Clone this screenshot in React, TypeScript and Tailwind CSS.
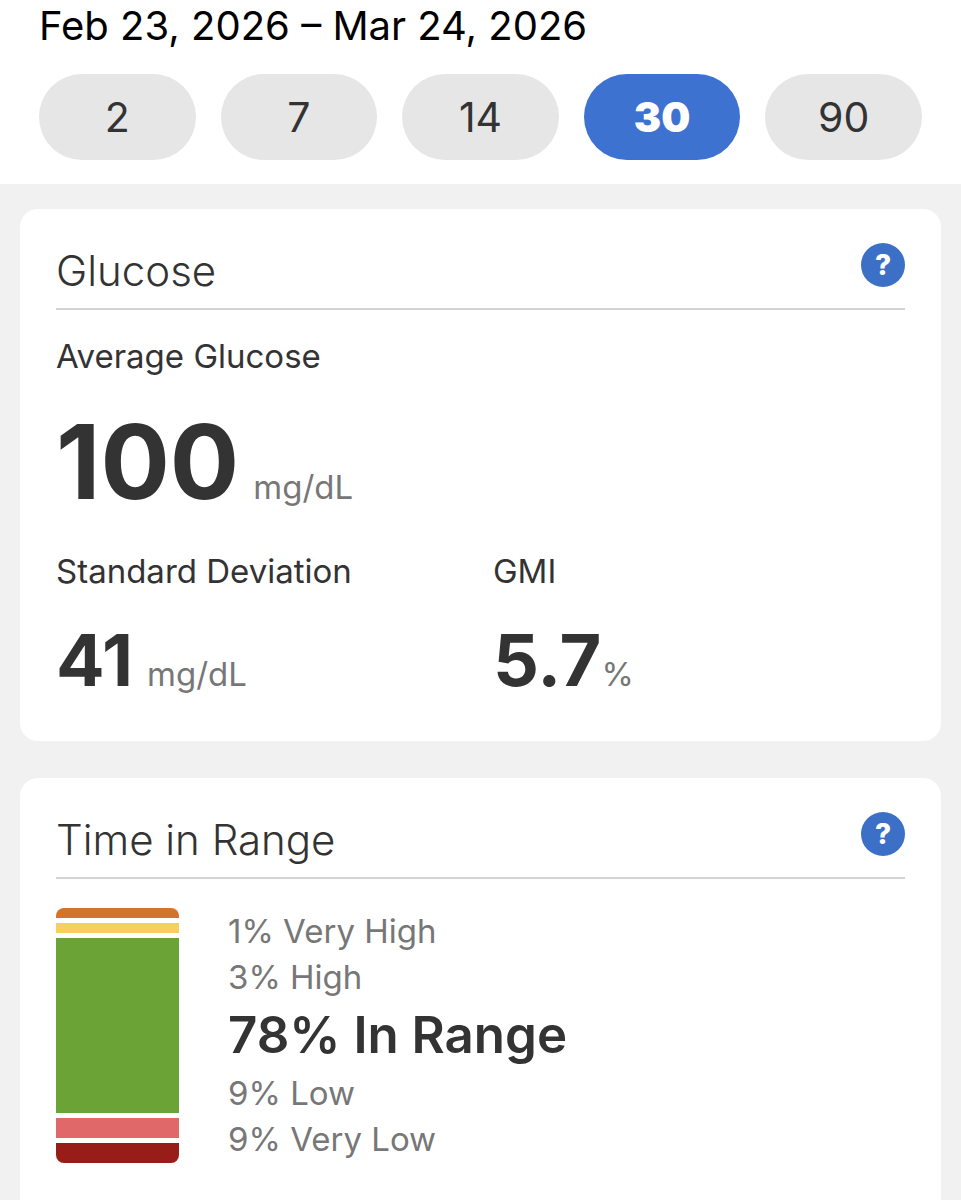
import { useState } from "react";
import type { ReactNode } from "react";
import clsx from "clsx";

const dayRanges = [2, 7, 14, 30, 90];

const rangeBands = [
    { label: "1% Very High", color: "bg-[#d3742d]", height: "h-[10px]" },
    { label: "3% High", color: "bg-[#f6cf5e]", height: "h-[10px]" },
    { label: "78% In Range", color: "bg-[#6ca336]", height: "h-[175px]", main: true },
    { label: "9% Low", color: "bg-[#e06868]", height: "h-[20px]" },
    { label: "9% Very Low", color: "bg-[#981c17]", height: "h-[20px]" },
];

type CardProps = {
    title: string;
    className?: string;
    children: ReactNode;
};

function Card({ title, className, children }: CardProps) {
    return (
        <section className={clsx("bg-white px-9 pt-[34px] pb-[30px]", className)}>
            <div className="flex items-start justify-between h-[67px] border-b-2 border-[#d4d4d4]">
                <h2 className="text-[42px] leading-[56px] font-light">{title}</h2>
                <button
                    type="button"
                    aria-label={`About ${title}`}
                    className="flex items-center justify-center size-11 rounded-full bg-[#3b70c6] text-white text-[28px] leading-none font-extrabold"
                >
                    ?
                </button>
            </div>
            {children}
        </section>
    );
}

type StatProps = {
    label: string;
    value: string;
    unit: string;
    large?: boolean;
    tight?: boolean;
};

function Stat({ label, value, unit, large, tight }: StatProps) {
    return (
        <div>
            <h3 className="text-[33px] leading-[44px]">{label}</h3>
            <p
                className={clsx(
                    "flex items-baseline",
                    tight ? "gap-0" : "gap-[14px]",
                    large ? "mt-6" : "mt-4"
                )}
            >
                <span
                    className={clsx(
                        "font-bold",
                        large ? "text-[103px] leading-[120px]" : "text-[72px] leading-[102px]"
                    )}
                >
                    {value}
                </span>
                <span className="text-[33px] leading-[44px] text-[#777777]">{unit}</span>
            </p>
        </div>
    );
}

export default function App() {
    const [days, setDays] = useState(30);

    return (
        <div className="flex flex-col min-h-screen bg-[#f1f1f1] text-[#333333] font-['Inter',sans-serif]">
            {/* Date range and day picker */}
            <header className="bg-white px-[39px] pb-6">
                <h1 className="text-[40px] leading-[52px] text-black whitespace-nowrap">
                    Feb 23, 2026 – Mar 24, 2026
                </h1>
                <div className="grid grid-cols-5 gap-[25px] mt-[22px]">
                    {dayRanges.map((range) => (
                        <button
                            key={range}
                            type="button"
                            aria-pressed={range === days}
                            onClick={() => setDays(range)}
                            className={clsx(
                                "h-[86px] pt-[2px] rounded-full text-[41px]",
                                range === days
                                    ? "bg-[#3e72d1] text-white font-black"
                                    : "bg-[#e6e6e6]"
                            )}
                        >
                            {range}
                        </button>
                    ))}
                </div>
            </header>

            <main className="grow flex flex-col gap-[37px] px-5 pt-[25px]">
                <Card title="Glucose" className="rounded-[18px]">
                    <div className="pt-6">
                        <Stat label="Average Glucose" value="100" unit="mg/dL" large />
                    </div>
                    <div className="grid grid-cols-[437px_1fr] pt-[27px]">
                        <Stat label="Standard Deviation" value="41" unit="mg/dL" />
                        <Stat label="GMI" value="5.7" unit="%" tight />
                    </div>
                </Card>

                {/* Last card runs to the bottom edge of the screen */}
                <Card title="Time in Range" className="grow rounded-t-[18px]">
                    <div className="flex items-start gap-[49px] pt-[29px]">
                        <div className="flex flex-col gap-[5px] w-[123px] shrink-0 rounded-lg overflow-hidden">
                            {rangeBands.map((band) => (
                                <div key={band.label} className={clsx(band.color, band.height)} />
                            ))}
                        </div>
                        <ul>
                            {rangeBands.map((band) => (
                                <li
                                    key={band.label}
                                    className={clsx(
                                        band.main
                                            ? "text-[51px] leading-[70px] font-semibold"
                                            : "text-[33px] leading-[46px] text-[#777777]"
                                    )}
                                >
                                    {band.label}
                                </li>
                            ))}
                        </ul>
                    </div>
                </Card>
            </main>
        </div>
    );
}
